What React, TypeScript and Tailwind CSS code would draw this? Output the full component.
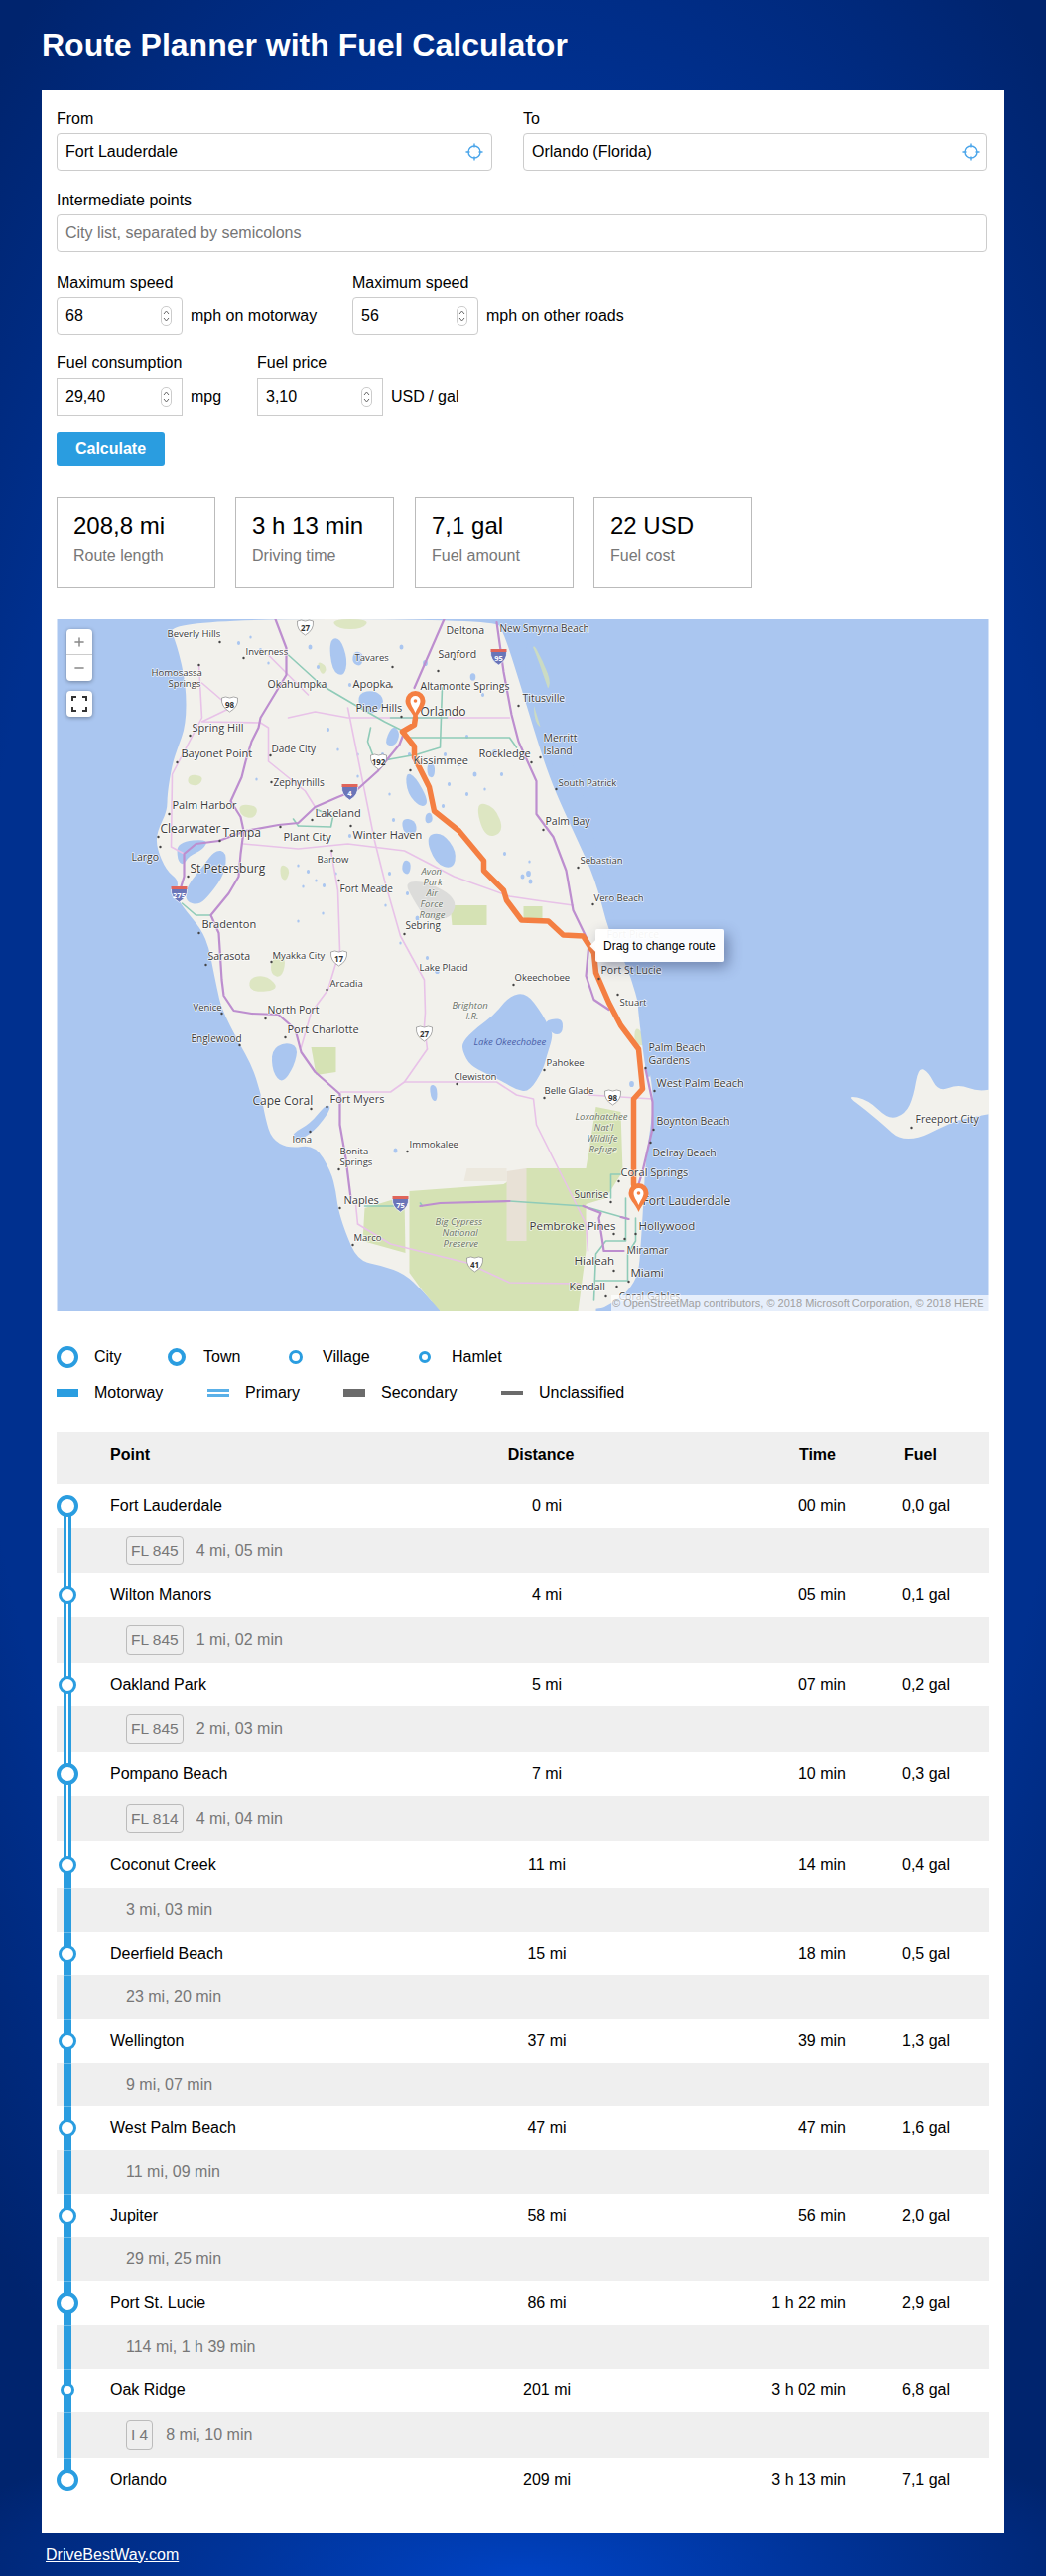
import { Plus, Minus } from "lucide-react";

const water = "#aac6f0";
const land = "#f2f1ec";
const park = "#d5e2b4";
const purple = "#bd8ecf";
const pink = "#e8c2e8";
const teal = "#8fcbb8";
const route = "#f47f42";

// rounds a "x,y x,y ..." outline into a soft blob
function blob(pts: string) {
  const p = (pts.match(/\d+,\d+/g) ?? []).map((s) => s.split(",").map(Number));
  const mid = (a: number[], b: number[]) => `${(a[0] + b[0]) / 2},${(a[1] + b[1]) / 2}`;
  let d = `M${mid(p[p.length - 1], p[0])}`;
  p.forEach((pt, i) => {
    d += ` Q${pt[0]},${pt[1]} ${mid(pt, p[(i + 1) % p.length])}`;
  });
  return d + " Z";
}

const mainland =
  "M167,624 L178,650 187,690 187,730 178,755 173,770 168,800 168,817 158,837 157,853 167,877 180,887 176,900 183,913 203,937 210,955 213,970 218,995 223,1017 240,1050 253,1073 262,1100 267,1127 273,1147 290,1157 317,1153 333,1180 338,1200 340,1217 347,1240 360,1270 385,1275 407,1283 425,1300 443,1321 600,1321 617,1313 633,1300 643,1283 645,1255 647,1227 650,1167 656,1130 658,1100 650,1060 648,1033 640,1000 630,970 613,940 600,887 577,837 557,793 543,753 523,687 507,637 498,624 Z";

const lakes = [
  "513,1003 530,1000 545,1020 553,1035 557,1043 550,1065 547,1077 533,1100 520,1098 507,1090 490,1082 473,1073 466,1060 465,1050 480,1035 497,1023",
  "178,848 210,845 204,856 190,862 184,872 178,866",
  "188,892 204,873 216,856 228,858 226,880 212,900 200,912 186,908",
  "273,1058 286,1050 300,1054 296,1074 284,1092 274,1080",
  "293,1142 312,1132 328,1112 334,1116 316,1140 298,1150",
  "360,698 378,695 388,706 378,720 362,716",
  "331,645 342,642 350,665 346,682 334,676",
  "356,656 366,658 364,672 354,668",
  "408,778 418,782 432,808 424,814 410,800",
  "428,842 445,838 460,858 456,876 438,870",
  "404,824 418,826 420,840 406,840",
  "430,768 438,770 437,784 430,782",
  "428,820 434,818 436,828 428,830",
  "395,730 403,738 398,752 386,750",
  "406,866 414,868 412,882 404,878",
  "432,1092 440,1094 440,1110 434,1108",
  "548,1030 556,1026 567,1027 566,1042 556,1042",
  "531,640 541,662 552,695 562,722 577,772 591,812 602,862 612,902 622,936 615,932 592,862 572,812 556,772 541,722 527,677",
  "641,1002 651,1040 656,1085 651,1085 645,1040",
];

// ponds dotted over the interior: x, y, radius
const ponds = [
  [240, 648, 1.6], [252, 642, 1.2], [262, 655, 1.6], [270, 668, 1.2], [312, 652, 2], [320, 672, 1.6], [352, 690, 1.6], [404, 652, 2],
  [428, 668, 2.4], [476, 682, 2.8], [486, 700, 1.6], [470, 742, 1.6], [498, 758, 2.4], [505, 780, 1.6], [462, 770, 1.6], [478, 780, 2],
  [452, 790, 1.6], [470, 800, 1.6], [488, 795, 1.2], [446, 812, 1.6], [392, 800, 1.2], [360, 782, 1.2], [352, 842, 1.6], [396, 826, 1.6],
  [310, 878, 1.6], [318, 887, 1.2], [305, 893, 1.2], [326, 892, 1.6], [300, 872, 1.2], [338, 880, 1.2], [392, 880, 1.6], [385, 895, 2.4],
  [410, 900, 1.6], [420, 925, 2], [403, 950, 1.2], [430, 965, 1.6], [440, 978, 2.4], [388, 912, 1.2], [300, 928, 1.2], [325, 920, 1.2],
  [508, 860, 1.6], [526, 883, 2], [534, 888, 2], [533, 868, 1.2], [532, 880, 2.4], [258, 785, 1.2], [330, 735, 1.6], [360, 760, 1.2],
  [275, 1065, 1.2], [398, 1159, 2], [636, 1092, 2.4], [562, 1030, 1.6], [340, 755, 1.2], [385, 760, 1.6], [448, 760, 1.6], [412, 760, 1.6],
];

const parks = [
  "M412,1200 L507,1193 530,1177 590,1177 600,1115 625,1120 627,1180 610,1207 590,1213 590,1260 582,1321 443,1321 425,1300 412,1282 Z",
  "M367,1217 L407,1205 408,1262 365,1250 Z",
  "M453,912 L490,912 490,932 455,932 Z",
  "M527,913 L546,913 546,925 527,925 Z",
  "M313,1055 L338,1055 338,1080 318,1083 Z",
];

const paleParks = [
  "M333,624 L372,624 365,634 340,634 Z",
  "M535,645 L546,665 556,690 545,700 538,680 Z",
  "M537,700 L552,712 548,735 538,728 Z",
  "M478,808 L498,812 508,838 488,845 Z",
  "M640,1033 L650,1045 648,1055 638,1050 Z",
  "M273,965 L288,963 284,985 272,982 Z",
  "M250,985 L268,982 282,997 252,1000 Z",
  "M190,780 L205,782 200,792 188,790 Z",
  "M240,810 L260,812 256,825 242,822 Z",
  "M282,870 L292,875 288,888 282,884 Z",
  "M318,665 L330,672 324,682 Z",
];

const purpleRoads = [
  "M277,624 L288,653 288,680 262,723 260,733 253,747 247,767 243,783 232,807 242,823 245,837 242,860 240,883 230,900 212,922 220,940 223,987 225,1003 235,1018 253,1021 280,1022 297,1037 303,1060 317,1080 342,1102 342,1133 348,1167 353,1207",
  "M220,847 L247,837 280,831 300,829 317,813 340,803 360,795 380,777 402,750 407,737",
  "M220,847 L197,850 185,860 185,883 182,893",
  "M447,624 L417,693",
  "M500,627 L507,677 515,720 522,747 540,787 540,820 557,843 570,877 577,917 593,950 590,983 598,1007 613,1017",
  "M650,1077 L657,1110 657,1137 647,1180 643,1193",
  "M423,1215 L443,1212 513,1210",
  "M587,1215 L605,1222 603,1227 607,1253 608,1260 628,1260",
  "M633,1228 L625,1226",
];

const pinkRoads = [
  "M200,670 L203,723 173,780 172,853 185,860",
  "M203,688 L232,713 203,727 262,728 270,733 270,767 307,797 317,813",
  "M290,723 L317,717 350,723 417,723 467,723 513,723",
  "M245,850 L300,855 350,850 407,857 457,883 513,903 540,907 577,912",
  "M350,713 L377,847 387,887 403,943 427,987 428,1020 427,1033 430,1057",
  "M430,1057 L407,1090 393,1100 343,1100",
  "M407,1090 L500,1090 520,1103 537,1107 540,1133 590,1233 592,1260",
  "M593,1103 L657,1107",
  "M333,857 L340,897 342,957 330,997 313,1020 303,1055",
  "M360,1233 L393,1253 470,1272 513,1292 583,1293",
  "M358,1213 L360,1233",
  "M270,660 L310,700",
];

const tealRoads = [
  "M290,660 L323,690 357,710 387,727 407,737",
  "M373,733 L370,747 378,768 392,765",
  "M407,743 L513,743 520,753",
  "M393,723 L450,723",
  "M445,693 L443,753 420,760 392,765",
  "M300,832 L333,833 335,823 318,815",
  "M300,832 L295,825",
  "M183,910 L197,922 212,922",
  "M615,1183 L615,1207 M615,1183 L625,1183",
  "M630,1207 L630,1250 610,1250 600,1263 598,1310",
  "M640,1227 L640,1250 632,1263 632,1290 600,1290",
  "M367,1215 L400,1215 M423,1212 L425,1215 M513,1210 L587,1215 633,1228",
];

const routeLine =
  "M418,723 L417,730 405,737 417,752 417,763 432,793 437,817 462,837 487,867 487,877 507,897 510,907 525,927 552,928 567,942 587,943 598,960 600,980 613,1010 625,1033 643,1057 647,1097 638,1107 638,1193 643,1213";

const labels: [string, number, number, number][] = [
  ["Beverly Hills", 168, 642, 9.5],
  ["Inverness", 247, 660, 9.5],
  ["Homosassa", 152, 681, 9.5],
  ["Springs", 169, 692, 9.5],
  ["Okahumpka", 269, 693, 10.5],
  ["Tavares", 357, 666, 9.5],
  ["Deltona", 449, 639, 10.5],
  ["Sanford", 441, 663, 10.5],
  ["New Smyrna Beach", 503, 637, 10],
  ["Apopka", 355, 693, 11],
  ["Altamonte Springs", 423, 695, 10.5],
  ["Titusville", 526, 707, 10.5],
  ["Pine Hills", 358, 717, 11],
  ["Orlando", 423, 721, 12],
  ["Spring Hill", 193, 737, 11],
  ["Merritt", 547, 747, 10.5],
  ["Island", 547, 760, 10.5],
  ["Bayonet Point", 182, 763, 11],
  ["Dade City", 273, 758, 10],
  ["Rockledge", 482, 763, 11],
  ["Kissimmee", 416, 770, 11],
  ["South Patrick", 562, 792, 9.5],
  ["Zephyrhills", 275, 792, 10],
  ["Palm Bay", 549, 831, 10.5],
  ["Palm Harbor", 173, 815, 11],
  ["Lakeland", 317, 823, 11],
  ["Clearwater", 161, 839, 12],
  ["Tampa", 224, 843, 12],
  ["Plant City", 285, 847, 11],
  ["Winter Haven", 355, 845, 11],
  ["Largo", 132, 867, 10.5],
  ["Bartow", 319, 869, 9.5],
  ["Sebastian", 584, 870, 9.5],
  ["St Petersburg", 191, 879, 12],
  ["Fort Meade", 342, 899, 10],
  ["Vero Beach", 598, 908, 9.5],
  ["Sebring", 408, 936, 10],
  ["Bradenton", 203, 935, 11],
  ["Fort Pierce", 611, 945, 10.5],
  ["Sarasota", 209, 967, 10.5],
  ["Myakka City", 274, 966, 9.5],
  ["Lake Placid", 422, 978, 9.5],
  ["Okeechobee", 518, 988, 9.5],
  ["Port St Lucie", 605, 981, 10.5],
  ["Arcadia", 332, 994, 9.5],
  ["Stuart", 624, 1013, 9.5],
  ["Venice", 194, 1018, 9.5],
  ["North Port", 269, 1021, 10.5],
  ["Port Charlotte", 289, 1041, 11],
  ["Englewood", 192, 1050, 10],
  ["Clewiston", 457, 1088, 9.5],
  ["Palm Beach", 653, 1059, 10.5],
  ["Gardens", 653, 1072, 10.5],
  ["Pahokee", 550, 1074, 9.5],
  ["West Palm Beach", 661, 1095, 11],
  ["Belle Glade", 548, 1102, 9.5],
  ["Cape Coral", 254, 1113, 12],
  ["Fort Myers", 332, 1111, 11],
  ["Boynton Beach", 661, 1133, 10.5],
  ["Freeport City", 922, 1131, 10.5],
  ["Iona", 294, 1151, 9.5],
  ["Immokalee", 412, 1156, 9.5],
  ["Bonita", 342, 1163, 9.5],
  ["Springs", 342, 1174, 9.5],
  ["Delray Beach", 657, 1165, 10.5],
  ["Coral Springs", 625, 1185, 11],
  ["Sunrise", 578, 1207, 10],
  ["Naples", 346, 1213, 11],
  ["Fort Lauderdale", 647, 1214, 12],
  ["Pembroke Pines", 533, 1239, 11.5],
  ["Hollywood", 643, 1239, 11.5],
  ["Marco", 356, 1250, 9.5],
  ["Miramar", 631, 1263, 10.5],
  ["Hialeah", 578, 1274, 11.5],
  ["Miami", 635, 1286, 11.5],
  ["Kendall", 573, 1300, 10.5],
  ["Coral Gables", 623, 1310, 10.5],
];

const italics: [string, number, number, string?][] = [
  ["Avon", 424, 881],
  ["Park", 426, 892],
  ["Air", 429, 903],
  ["Force", 423, 914],
  ["Range", 422, 925],
  ["Brighton", 455, 1016],
  ["I.R.", 469, 1027],
  ["Lake Okeechobee", 477, 1053, "#4a5fa8"],
  ["Loxahatchee", 579, 1128],
  ["Nat'l", 598, 1139],
  ["Wildlife", 591, 1150],
  ["Refuge", 593, 1161],
  ["Big Cypress", 438, 1234],
  ["National", 445, 1245],
  ["Preserve", 446, 1256],
];

const dots = [
  [221, 647], [245, 663], [200, 670], [191, 741], [178, 768], [272, 761], [273, 788], [170, 820], [159, 843], [161, 853],
  [221, 847], [189, 883], [282, 833], [314, 826], [353, 832], [334, 857], [341, 887], [407, 941], [200, 940], [207, 972],
  [273, 969], [329, 997], [223, 1021], [267, 1026], [287, 1045], [241, 1053], [313, 1117], [329, 1115], [312, 1140], [341, 1178],
  [410, 1160], [342, 1217], [355, 1254], [460, 1092], [457, 664], [395, 672], [394, 692], [441, 676], [404, 722], [413, 776],
  [522, 711], [535, 768], [544, 763], [547, 836], [560, 795], [582, 874], [597, 911], [517, 992], [603, 986], [622, 1002],
  [650, 1076], [659, 1099], [548, 1106], [548, 1078], [658, 1138], [655, 1151], [623, 1190], [615, 1211], [618, 1243], [640, 1243],
  [629, 1248], [618, 1280], [633, 1291], [621, 1296], [610, 1306], [918, 1136],
];

function Shield({ x, y, n }: { x: number; y: number; n: string }) {
  return (
    <g>
      <path
        d={`M${x - 8},${y - 7} q4,-2 8,0 q4,-2 8,0 q1,9 -8,14 q-9,-5 -8,-14 Z`}
        fill="#fff"
        stroke="#888"
        strokeWidth="0.7"
      />
      <text x={x} y={y + 3} textAnchor="middle" fontSize="8" fontWeight="700" fill="#333" fontFamily="Open Sans, sans-serif">
        {n}
      </text>
    </g>
  );
}

function Interstate({ x, y, n }: { x: number; y: number; n: string }) {
  return (
    <g>
      <path d={`M${x - 8},${y - 6} h16 q1,9 -8,14 q-9,-5 -8,-14 Z`} fill="#6a75b8" stroke="#fff" strokeWidth="0.7" />
      <path d={`M${x - 8},${y - 8} h16 v3 h-16 Z`} fill="#e0655a" />
      <text x={x} y={y + 4} textAnchor="middle" fontSize="7.5" fontWeight="700" fill="#fff" fontFamily="Open Sans, sans-serif">
        {n}
      </text>
    </g>
  );
}

function Pin({ x, y }: { x: number; y: number }) {
  return (
    <g>
      <path
        d={`M${x},${y + 29} C${x - 4},${y + 20} ${x - 10},${y + 16} ${x - 10},${y + 10} A10,10 0 1 1 ${x + 10},${y + 10} C${x + 10},${y + 16} ${x + 4},${y + 20} ${x},${y + 29} Z`}
        fill={route}
      />
      <path
        d={`M${x},${y + 22} C${x - 2},${y + 17} ${x - 5},${y + 14} ${x - 5},${y + 10} A5,5 0 1 1 ${x + 5},${y + 10} C${x + 5},${y + 14} ${x + 2},${y + 17} ${x},${y + 22} Z`}
        fill="#fff"
      />
      <circle cx={x} cy={y + 10} r="1.8" fill={route} />
    </g>
  );
}

function MapDrawing() {
  return (
    <svg viewBox="57 624 939 697" className="block w-full h-full">
      <rect x="57" y="624" width="939" height="697" fill={water} />
      <path d={blob(mainland)} fill={land} />
      <path d="M443,1290 L600,1290 600,1321 443,1321 Z" fill={land} />
      <path
        d={blob(
          "852,1103 872,1118 892,1135 905,1147 925,1147 945,1137 965,1128 985,1124 1010,1120 1010,1095 985,1100 965,1092 945,1100 935,1080 925,1075 920,1105 912,1122 895,1128 875,1108",
        )}
        fill={land}
      />
      {parks.map((d, i) => (
        <path key={i} d={d} fill={park} />
      ))}
      {paleParks.map((d, i) => (
        <path key={i} d={blob(d)} fill={park} opacity="0.75" />
      ))}
      <path d="M510,1180 L530,1177 530,1250 510,1250 Z" fill="#e8e1d6" />
      <path d="M467,1190 L510,1190 510,1177 470,1177 Z" fill="#ece8de" />
      <path d={blob("407,888 430,888 460,905 455,925 430,928 415,905")} fill="#dcdcda" />
      {lakes.map((d, i) => (
        <path key={i} d={blob(d)} fill={water} />
      ))}
      {ponds.map(([x, y, r], i) => (
        <ellipse key={i} cx={x} cy={y} rx={r} ry={r * 1.3} fill={water} />
      ))}
      <g fill="none" strokeLinejoin="round" strokeLinecap="round">
        {pinkRoads.map((d, i) => (
          <path key={i} d={d} stroke={pink} strokeWidth="1.6" />
        ))}
        {tealRoads.map((d, i) => (
          <path key={i} d={d} stroke={teal} strokeWidth="1.6" />
        ))}
        {purpleRoads.map((d, i) => (
          <path key={i} d={d} stroke={purple} strokeWidth="2.2" />
        ))}
        <path d={routeLine} stroke={route} strokeWidth="5.5" />
      </g>
      {dots.map(([x, y], i) => (
        <circle key={i} cx={x} cy={y} r="1.2" fill="#444" />
      ))}
      <Shield x={307} y={633} n="27" />
      <Shield x={231} y={710} n="98" />
      <Shield x={381} y={768} n="192" />
      <Shield x={341} y={966} n="17" />
      <Shield x={427} y={1042} n="27" />
      <Shield x={478} y={1274} n="41" />
      <Shield x={617} y={1106} n="98" />
      <Interstate x={502} y={662} n="95" />
      <Interstate x={352} y={798} n="4" />
      <Interstate x={180} y={901} n="275" />
      <Interstate x={403} y={1213} n="75" />
      <g fontFamily="Open Sans, sans-serif" fill="#3a3a3a" stroke="#ffffff" strokeOpacity="0.75" strokeWidth="1.6" style={{ paintOrder: "stroke" }}>
        {labels.map(([t, x, y, s], i) => (
          <text key={i} x={x} y={y} fontSize={s} strokeLinejoin="round">
            {t}
          </text>
        ))}
        {italics.map(([t, x, y, c], i) => (
          <text key={i} x={x} y={y} fontSize="9.5" fontStyle="italic" fill={c ?? "#6a7266"} strokeOpacity={c ? 0 : 0.5}>
            {t}
          </text>
        ))}
      </g>
      <Pin x={418} y={696} />
      <Pin x={643} y={1192} />
    </svg>
  );
}

function Crosshair() {
  return (
    <svg width="18" height="18" viewBox="0 0 18 18" fill="none" stroke="#4aa5ea" strokeWidth="1.4">
      <circle cx="9" cy="9" r="6" />
      <path d="M9 0.5v4M9 13.5v4M0.5 9h4M13.5 9h4" />
    </svg>
  );
}

function Spinner() {
  return (
    <span className="absolute right-[11px] top-[9px] flex h-[20px] w-[11px] flex-col items-center justify-center gap-[2px] rounded-[5px] border border-[#ccc] bg-white">
      <svg width="7" height="5" viewBox="0 0 7 5" fill="none" stroke="#666" strokeWidth="1">
        <path d="M1 4l2.5-3L6 4" />
      </svg>
      <svg width="7" height="5" viewBox="0 0 7 5" fill="none" stroke="#666" strokeWidth="1">
        <path d="M1 1l2.5 3L6 1" />
      </svg>
    </span>
  );
}

function NumberField({ label, value, unit, width, square }: { label: string; value: string; unit: string; width: string; square?: boolean }) {
  return (
    <div className={width}>
      <div className="text-black leading-5">{label}</div>
      <div className={`flex items-center ${square ? "mt-[5px]" : "mt-1"}`}>
        <div className="relative w-[127px]">
          <input
            defaultValue={value}
            className={`block h-[38px] w-full border border-[#ccc] pl-2 pr-6 text-black outline-none ${square ? "" : "rounded"}`}
          />
          <Spinner />
        </div>
        <span className="ml-2 text-black">{unit}</span>
      </div>
    </div>
  );
}

function Card({ value, label, margin }: { value: string; label: string; margin?: string }) {
  return (
    <div className={`h-[91px] w-40 border border-[#bbb] pl-4 pt-[13px] ${margin ?? ""}`}>
      <div className="text-2xl leading-[30px] text-black">{value}</div>
      <div className="mt-[5px] leading-5 text-[#777]">{label}</div>
    </div>
  );
}

function LegendRing({ label, size, width }: { label: string; size: string; width: string }) {
  return (
    <div className={`flex items-center ${width}`}>
      <div className="mr-4 flex w-[22px] justify-center">
        <div className={`rounded-full border-[#2a9de0] bg-white ${size}`} />
      </div>
      <span className="text-black">{label}</span>
    </div>
  );
}

function LegendLine({ label, bar, width }: { label: string; bar: string; width: string }) {
  return (
    <div className={`flex items-center ${width}`}>
      <div className={`mr-4 w-[22px] ${bar}`} />
      <span className="text-black">{label}</span>
    </div>
  );
}

type Kind = "primary" | "motorway" | "none";

const points: {
  name: string;
  dist: string;
  time: string;
  fuel: string;
  ring: string;
  up: Kind;
  down: Kind;
  road?: string;
  seg?: string;
  tall?: boolean;
}[] = [
  { name: "Fort Lauderdale", dist: "0 mi", time: "00 min", fuel: "0,0 gal", ring: "large", up: "none", down: "primary", road: "FL 845", seg: "4 mi, 05 min" },
  { name: "Wilton Manors", dist: "4 mi", time: "05 min", fuel: "0,1 gal", ring: "medium", up: "primary", down: "primary", road: "FL 845", seg: "1 mi, 02 min" },
  { name: "Oakland Park", dist: "5 mi", time: "07 min", fuel: "0,2 gal", ring: "medium", up: "primary", down: "primary", road: "FL 845", seg: "2 mi, 03 min" },
  { name: "Pompano Beach", dist: "7 mi", time: "10 min", fuel: "0,3 gal", ring: "large", up: "primary", down: "primary", road: "FL 814", seg: "4 mi, 04 min" },
  { name: "Coconut Creek", dist: "11 mi", time: "14 min", fuel: "0,4 gal", ring: "medium", up: "primary", down: "motorway", seg: "3 mi, 03 min", tall: true },
  { name: "Deerfield Beach", dist: "15 mi", time: "18 min", fuel: "0,5 gal", ring: "medium", up: "motorway", down: "motorway", seg: "23 mi, 20 min" },
  { name: "Wellington", dist: "37 mi", time: "39 min", fuel: "1,3 gal", ring: "medium", up: "motorway", down: "motorway", seg: "9 mi, 07 min" },
  { name: "West Palm Beach", dist: "47 mi", time: "47 min", fuel: "1,6 gal", ring: "medium", up: "motorway", down: "motorway", seg: "11 mi, 09 min" },
  { name: "Jupiter", dist: "58 mi", time: "56 min", fuel: "2,0 gal", ring: "medium", up: "motorway", down: "motorway", seg: "29 mi, 25 min" },
  { name: "Port St. Lucie", dist: "86 mi", time: "1 h 22 min", fuel: "2,9 gal", ring: "large", up: "motorway", down: "motorway", seg: "114 mi, 1 h 39 min" },
  { name: "Oak Ridge", dist: "201 mi", time: "3 h 02 min", fuel: "6,8 gal", ring: "small", up: "motorway", down: "motorway", road: "I 4", seg: "8 mi, 10 min" },
  { name: "Orlando", dist: "209 mi", time: "3 h 13 min", fuel: "7,1 gal", ring: "large", up: "motorway", down: "none" },
];

function Line({ kind, pos }: { kind: Kind; pos: string }) {
  if (kind === "none") return null;
  return (
    <div
      className={`absolute left-[7px] w-2 ${pos} ${
        kind === "primary" ? "border-x-[3px] border-[#2a9de0] bg-white" : "border-t border-[#6bbbea] bg-[#2a9de0]"
      }`}
    />
  );
}

function PointRow({ p }: { p: (typeof points)[number] }) {
  const ring =
    p.ring === "large"
      ? "h-[22px] w-[22px] border-4"
      : p.ring === "medium"
        ? "h-[18px] w-[18px] border-[3.5px]"
        : "h-[14px] w-[14px] border-[3px]";
  return (
    <>
      <div className={`relative flex items-center bg-white text-black ${p.tall ? "h-[47px]" : "h-11"}`}>
        <Line kind={p.up} pos="top-0 h-1/2" />
        <Line kind={p.down} pos="top-1/2 h-1/2" />
        <div className={`absolute left-[11px] top-1/2 z-10 -translate-x-1/2 -translate-y-1/2 rounded-full border-[#2a9de0] bg-white ${ring}`} />
        <div className="flex-1 pl-[54px]">{p.name}</div>
        <div className="w-[180px] text-center">{p.dist}</div>
        <div className="w-[211px] text-right">{p.time}</div>
        <div className="w-[145px] pl-[57px]">{p.fuel}</div>
      </div>
      {p.seg && (
        <div className={`relative flex items-center bg-[#efefef] pl-[70px] text-[#777] ${p.road ? "h-[46px]" : "h-11"}`}>
          <Line kind={p.down} pos="top-0 h-full" />
          {p.road && (
            <span className="mr-[13px] flex h-[30px] items-center rounded border border-[#bbb] px-[4px] text-[15.5px]">{p.road}</span>
          )}
          <span>{p.seg}</span>
        </div>
      )}
    </>
  );
}

export default function App() {
  return (
    <div className="min-h-[2595px] bg-[radial-gradient(ellipse_620px_170px_at_50%_100%,#0043c4_0%,#0043c400_100%),radial-gradient(ellipse_780px_1500px_at_50%_45%,#00308f_72%,#00246e_100%)] px-[42px] font-['Liberation_Sans',Arial,sans-serif] text-base">
      <h1 className="flex h-[91px] items-center pb-[1px] text-[32px] font-bold text-white">Route Planner with Fuel Calculator</h1>

      <div className="h-[2461px] bg-white px-[15px] pt-[19px]">
        {/* From / To */}
        <div className="flex gap-[31px]">
          <div className="w-[439px]">
            <div className="leading-5 text-black">From</div>
            <div className="relative mt-1">
              <input defaultValue="Fort Lauderdale" className="block h-[38px] w-full rounded border border-[#ccc] pl-2 text-black outline-none" />
              <span className="absolute right-[9px] top-[10px]">
                <Crosshair />
              </span>
            </div>
          </div>
          <div className="w-[468px]">
            <div className="leading-5 text-black">To</div>
            <div className="relative mt-1">
              <input defaultValue="Orlando (Florida)" className="block h-[38px] w-full rounded border border-[#ccc] pl-2 text-black outline-none" />
              <span className="absolute right-2 top-[10px]">
                <Crosshair />
              </span>
            </div>
          </div>
        </div>

        <div className="mt-5 leading-5 text-black">Intermediate points</div>
        <input
          placeholder="City list, separated by semicolons"
          className="mt-1 block h-[38px] w-[938px] rounded border border-[#ccc] pl-2 text-black outline-none placeholder:text-[#757575]"
        />

        <div className="mt-[21px] flex">
          <NumberField label="Maximum speed" value="68" unit="mph on motorway" width="w-[298px]" />
          <NumberField label="Maximum speed" value="56" unit="mph on other roads" width="w-[300px]" />
        </div>

        <div className="mt-[19px] flex">
          <NumberField label="Fuel consumption" value="29,40" unit="mpg" width="w-[202px]" square />
          <NumberField label="Fuel price" value="3,10" unit="USD / gal" width="w-[300px]" square />
        </div>

        <button className="mt-4 block h-[34px] w-[109px] rounded-[3px] bg-[#2a9de0] font-bold text-white">Calculate</button>

        {/* Totals */}
        <div className="mt-8 flex">
          <Card value="208,8 mi" label="Route length" />
          <Card value="3 h 13 min" label="Driving time" margin="ml-5" />
          <Card value="7,1 gal" label="Fuel amount" margin="ml-[21px]" />
          <Card value="22 USD" label="Fuel cost" margin="ml-5" />
        </div>

        {/* Map */}
        <div className="relative mt-8 h-[697px] overflow-hidden">
          <MapDrawing />
          <div className="absolute left-[10px] top-[10px] w-[26px] overflow-hidden rounded bg-white shadow-[0_1px_4px_rgba(0,0,0,0.35)]">
            <div className="flex h-[26px] items-center justify-center border-b border-[#ccc] text-[#888]">
              <Plus size={14} strokeWidth={2.5} />
            </div>
            <div className="flex h-[26px] items-center justify-center text-[#888]">
              <Minus size={14} strokeWidth={2.5} />
            </div>
          </div>
          <div className="absolute left-[10px] top-[72px] flex h-[26px] w-[26px] items-center justify-center rounded bg-white shadow-[0_1px_4px_rgba(0,0,0,0.35)]">
            <svg width="16" height="16" viewBox="0 0 16 16" fill="none" stroke="#333" strokeWidth="2">
              <path d="M1 5V1h4M11 1h4v4M15 11v4h-4M5 15H1v-4" />
            </svg>
          </div>
          <div className="absolute left-[543px] top-[312px] flex h-[33px] w-[130px] items-center rounded-[2px] bg-white/95 pl-2 text-xs text-black shadow-[4px_5px_14px_rgba(40,50,90,0.45)]">
            Drag to change route
            <div className="absolute -left-[4px] top-[13px] h-2 w-2 rotate-45 bg-white/95" />
          </div>
          <div className="absolute bottom-0 right-0 h-4 w-[381px] whitespace-nowrap bg-white/70 pl-[1px] text-[11px] leading-4 text-[#a0a0a0]">
            © OpenStreetMap contributors, © 2018 Microsoft Corporation, © 2018 HERE
          </div>
        </div>

        {/* Legend */}
        <div className="mt-[35px] flex h-[22px] items-center">
          <LegendRing label="City" size="h-[22px] w-[22px] border-4" width="w-[110px]" />
          <LegendRing label="Town" size="h-[18px] w-[18px] border-4" width="w-[120px]" />
          <LegendRing label="Village" size="h-[14px] w-[14px] border-[3px]" width="w-[130px]" />
          <LegendRing label="Hamlet" size="h-3 w-3 border-[3px]" width="w-[110px]" />
        </div>
        <div className="mt-[14px] flex h-[22px] items-center">
          <LegendLine label="Motorway" bar="h-2 bg-[#2a9de0]" width="w-[152px]" />
          <LegendLine label="Primary" bar="h-2 border-y-[3px] border-[#5ab0e8] bg-white" width="w-[137px]" />
          <LegendLine label="Secondary" bar="h-2 bg-[#6b6b6b]" width="w-[159px]" />
          <LegendLine label="Unclassified" bar="h-1 bg-[#6b6b6b]" width="w-[160px]" />
        </div>

        {/* Table */}
        <div className="mt-[29px] flex h-[52px] items-start bg-[#efefef] pt-[11px] font-bold text-black">
          <div className="flex-1 pl-[54px]">Point</div>
          <div className="w-[180px] pr-3 text-center">Distance</div>
          <div className="w-[211px] pr-[10px] text-right">Time</div>
          <div className="w-[145px] pl-[59px]">Fuel</div>
        </div>
        {points.map((p) => (
          <PointRow key={p.name} p={p} />
        ))}
      </div>

      <div className="flex h-[43px] items-center pl-1">
        <a href="#" className="text-white underline">
          DriveBestWay.com
        </a>
      </div>
    </div>
  );
}
